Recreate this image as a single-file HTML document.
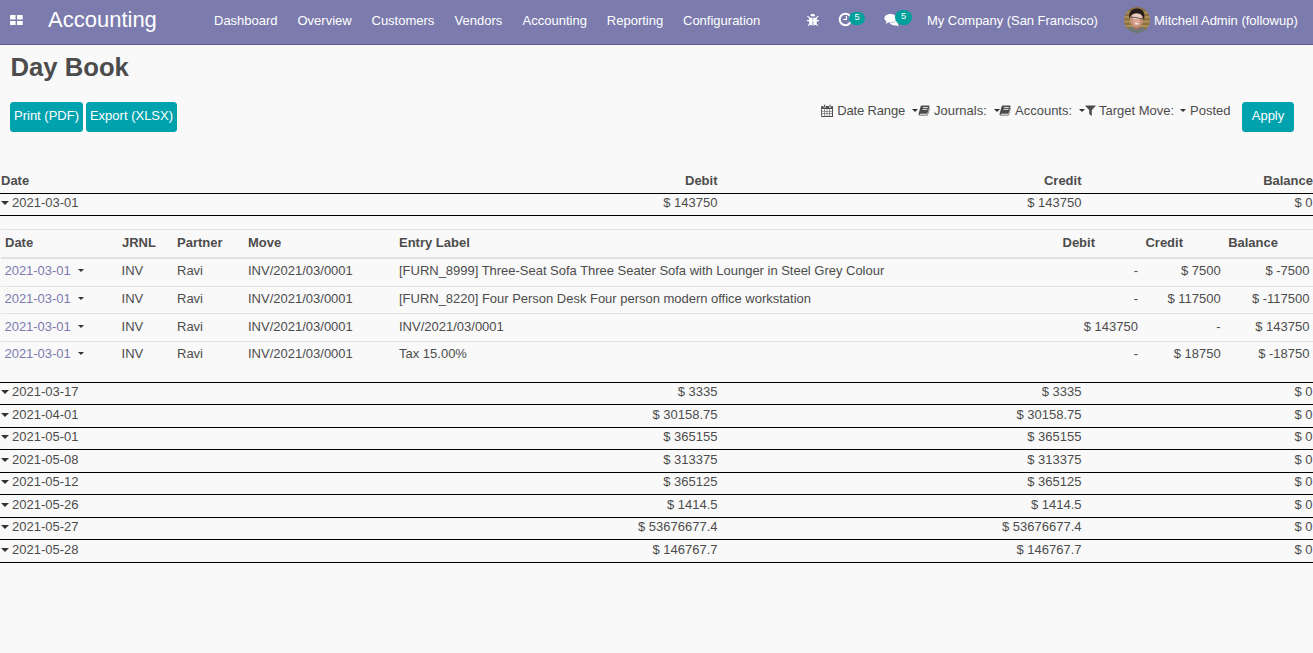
<!DOCTYPE html>
<html><head><meta charset="utf-8">
<style>
*{box-sizing:border-box}
html,body{margin:0;padding:0}
body{width:1313px;height:653px;overflow:hidden;background:#f9f9f9;font-family:"Liberation Sans",sans-serif;font-size:13px;color:#4c4c4c;position:relative}
.nav{position:absolute;left:0;top:0;width:1313px;height:45px;background:#7c7bad;border-bottom:1px solid #5f5e97;color:#fff}
.nav span.t{position:absolute;top:12.5px;font-size:13px;line-height:15px;white-space:nowrap;color:#fff}
.brand{position:absolute;left:48px;top:7.4px;font-size:22px;line-height:26px;color:#fff}
h1{position:absolute;left:10.6px;top:50.7px;margin:0;font-size:25.65px;line-height:32px;font-weight:bold;color:#4c4c4c}
.btn{position:absolute;background:#00a2ad;border:1px solid #00a2ad;border-radius:3px;color:#fff;font-size:13px;line-height:15px;padding:4.6px 0 0;text-align:center;white-space:nowrap;height:30px}
.f{position:absolute;top:103px;font-size:13px;line-height:15px;white-space:nowrap;color:#4c4c4c}
.row{position:absolute;left:0;width:1313px;font-size:13px;line-height:15px}
.row span{position:absolute;top:0;white-space:nowrap}
.row span.r{text-align:right}
.ln{position:absolute;left:0;width:1313px;height:1px;background:#000}
.caret{position:absolute;width:0;height:0;border-left:4px solid transparent;border-right:4px solid transparent;border-top:4px solid #333}
.hd{font-weight:bold}
.lnk{color:#7c7bad}
.bdg{position:absolute;background:#00a09d;color:#fff;font-size:9.3px;text-align:center}
.fi{position:absolute}
.bdg b{display:block;font-weight:normal}
.gl{position:absolute;left:1px;width:1312px;background:#dee2e6}
</style></head><body>
<div class="nav">
 <svg style="position:absolute;left:9.8px;top:14.6px" width="12.8" height="10.6" viewBox="0 0 12.8 10.6"><rect x="0" y="0" width="5.6" height="4.5" rx=".5" fill="#fff"/><rect x="7" y="0" width="5.7" height="4.5" rx=".5" fill="#fff"/><rect x="0" y="6" width="5.6" height="4.5" rx=".5" fill="#fff"/><rect x="7" y="6" width="5.7" height="4.5" rx=".5" fill="#fff"/></svg>
 <div class="brand">Accounting</div>
 <span class="t" style="left:214px">Dashboard</span>
 <span class="t" style="left:297.5px">Overview</span>
 <span class="t" style="left:371.5px">Customers</span>
 <span class="t" style="left:454.6px">Vendors</span>
 <span class="t" style="left:522.6px">Accounting</span>
 <span class="t" style="left:606.8px">Reporting</span>
 <span class="t" style="left:683px">Configuration</span>

 <!-- bug -->
 <svg style="position:absolute;left:806px;top:13px" width="14" height="14" viewBox="0 0 14 14" fill="none" stroke="#fff" stroke-width="1.1" stroke-linecap="round">
  <path d="M4.4 3.3 A2.4 2.5 0 0 1 9.2 3.3 Z" fill="#fff" stroke="none"/>
  <path d="M3 4.8 H10.8 V9.4 Q10.8 12.3 6.9 12.3 Q3 12.3 3 9.4 Z" fill="#fff" stroke="none"/>
  <path d="M6.9 5.2 V12.4" stroke="#8f8ebc" stroke-width=".9" stroke-linecap="butt"/>
  <path d="M1.3 7.6 H12.5 M1.8 3.3 L3.6 5.1 M12 3.3 L10.2 5.1 M3.7 11.2 L2.3 12.4 M10.1 11.2 L11.5 12.4"/>
 </svg>
 <!-- clock -->
 <svg style="position:absolute;left:837px;top:11px" width="17" height="17" viewBox="0 0 17 17">
  <circle cx="8.45" cy="8.45" r="5.75" fill="none" stroke="#fff" stroke-width="2"/>
  <path d="M8.8 4.9 h1.2 v4.1 h-3.9 v-1.1 h2.7 z" fill="#fff"/>
 </svg>
 <div class="bdg" style="left:849px;top:12px;width:16px;height:13px;border-radius:6.5px;line-height:11px"><b>5</b></div>
 <!-- comments -->
 <svg style="position:absolute;left:882px;top:12px" width="20" height="16" viewBox="0 0 20 16">
  <path d="M12.4 6.2 C15.2 6.2 17.4 7.8 17.4 9.8 C17.4 10.9 16.8 11.8 15.8 12.5 C16 13.1 16.4 13.7 17.1 14.1 C15.9 14.1 14.8 13.8 14 13.2 C13.5 13.3 12.9 13.4 12.4 13.4 C9.6 13.4 7.4 11.8 7.4 9.8 C7.4 7.8 9.6 6.2 12.4 6.2 Z" fill="#fff"/>
  <path d="M8.5 1.9 C11.9 1.9 14.6 3.8 14.6 6.1 C14.6 8.5 11.9 10.4 8.5 10.4 C7.9 10.4 7.3 10.3 6.8 10.2 C5.8 11.1 4.7 11.6 3.4 11.8 C4 11.2 4.5 10.5 4.6 9.5 C3.2 8.7 2.4 7.5 2.4 6.1 C2.4 3.8 5.1 1.9 8.5 1.9 Z" fill="#fff" stroke="#7c7bad" stroke-width=".9" paint-order="stroke"/>
 </svg>
 <div class="bdg" style="left:895px;top:10px;width:17px;height:15px;border-radius:7.7px;line-height:11px;padding-top:1px"><b>5</b></div>
 <!-- avatar -->
 <svg style="position:absolute;left:1124px;top:7px" width="26" height="26" viewBox="0 0 26 26">
  <defs><clipPath id="av"><circle cx="13" cy="13" r="13"/></clipPath>
  <filter id="bl" x="-10%" y="-10%" width="120%" height="120%"><feGaussianBlur stdDeviation=".55"/></filter></defs>
  <g clip-path="url(#av)"><g filter="url(#bl)">
   <rect x="-2" y="-2" width="30" height="30" fill="#8c7040"/>
   <g fill="#ab9058"><rect x="-2" y="4.5" width="30" height="2.2"/><rect x="-2" y="9" width="30" height="2.2"/><rect x="-2" y="13.5" width="30" height="2.2"/><rect x="-2" y="18" width="30" height="2.2"/><rect x="-2" y="22.5" width="30" height="2"/></g>
   <path d="M1 28 C2 22 6 20 9.5 19.8 L16.5 19.8 C20.5 20.8 22.5 22.5 23.5 28 Z" fill="#6c7876"/>
   <path d="M8.8 17 H15.8 V21.3 C13.4 23 11.2 23 8.8 21.3 Z" fill="#a8735e"/>
   <ellipse cx="12.5" cy="12.8" rx="6.6" ry="7.8" fill="#c8917a"/>
   <ellipse cx="13" cy="9.6" rx="4.8" ry="3.2" fill="#e9cdc1"/>
   <ellipse cx="12.3" cy="14.3" rx="3.6" ry="2" fill="#d9a591"/>
   <path d="M5.2 11.5 C4.2 5 8 1.2 13.2 1.4 C18.6 1.6 21.6 5 20 13.6 C19.2 9.6 18 7 14.2 6.4 C10 5.8 7 7.2 5.2 11.5 Z" fill="#241e1d"/>
   <path d="M6 10 L12 10.6 L19.2 12" stroke="#45393a" stroke-width=".8" fill="none"/>
   <ellipse cx="12.8" cy="16.8" rx="2.2" ry="1" fill="#f3e3de"/>
  </g></g>
 </svg>
 <span class="t" style="left:927px;letter-spacing:-.04px">My Company (San Francisco)</span>
 <span class="t" style="left:1154px">Mitchell Admin (followup)</span>
</div>
<h1>Day Book</h1>
<div class="btn" style="left:10px;top:102px;width:73px">Print (PDF)</div>
<div class="btn" style="left:86px;top:102px;width:91px">Export (XLSX)</div>
<div class="btn" style="left:1242px;top:102px;width:52px">Apply</div>
<span class="f" style="left:837.2px;letter-spacing:-.15px">Date Range</span>
<span class="f" style="left:934px">Journals:</span>
<span class="f" style="left:1015px">Accounts:</span>
<span class="f" style="left:1099px">Target Move:</span>
<span class="f" style="left:1190px">Posted</span>


<!-- calendar -->
<svg class="fi" style="left:821px;top:103.8px" width="12.2" height="13.2" viewBox="0 0 12.2 13.2">
 <rect x=".15" y="2" width="11.9" height="11" rx=".9" fill="#4c4c4c"/>
 <g fill="#f9f9f9"><rect x="1.05" y="5.00" width="2.1" height="2.0"/><rect x="3.65" y="5.00" width="2.1" height="2.0"/><rect x="6.25" y="5.00" width="2.1" height="2.0"/><rect x="8.85" y="5.00" width="2.1" height="2.0"/><rect x="1.05" y="7.50" width="2.1" height="2.0"/><rect x="3.65" y="7.50" width="2.1" height="2.0"/><rect x="6.25" y="7.50" width="2.1" height="2.0"/><rect x="8.85" y="7.50" width="2.1" height="2.0"/><rect x="1.05" y="10.00" width="2.1" height="2.0"/><rect x="3.65" y="10.00" width="2.1" height="2.0"/><rect x="6.25" y="10.00" width="2.1" height="2.0"/><rect x="8.85" y="10.00" width="2.1" height="2.0"/></g>
 <rect x="2.5" y="0" width="2.3" height="4" rx="1.1" fill="#f9f9f9"/><rect x="3.1" y=".5" width="1.1" height="3" rx=".55" fill="#4c4c4c"/>
 <rect x="7.9" y="0" width="2.3" height="4" rx="1.1" fill="#f9f9f9"/><rect x="8.5" y=".5" width="1.1" height="3" rx=".55" fill="#4c4c4c"/>
</svg>
<i class="caret" style="left:911.5px;top:109.3px;border-width:3px 3px 0 3px"></i>
<i class="caret" style="left:993.5px;top:109.3px;border-width:3px 3px 0 3px"></i>
<i class="caret" style="left:1079px;top:109.3px;border-width:3px 3px 0 3px"></i>
<i class="caret" style="left:1180px;top:109.3px;border-width:3px 3px 0 3px"></i>
<svg class="fi" style="left:917.5px;top:105px" width="12" height="11" viewBox="0 0 12 11"><path d="M3.6 .4 H10.9 Q11.7 .4 11.5 1.2 L9.6 8.1 Q9.4 8.8 8.6 8.8 H2.2 Q1.5 8.8 1.6 9.3 Q1.7 9.7 2.4 9.7 H8.9 Q9.5 9.7 9.7 9.1 L11.6 2.6 Q12 3 11.8 3.6 L10.1 9.6 Q9.8 10.6 8.9 10.6 H2 Q.4 10.6 .5 9 Q.5 8.6 .7 8.2 L2.6 1.6 Q2.9 .4 3.6 .4 Z" fill="#4c4c4c"/>
 <path d="M5.1 2.5 H9.8 M4.6 4.4 H9.3" stroke="#f9f9f9" stroke-width=".85" fill="none"/></svg>
<svg class="fi" style="left:998.8px;top:105px" width="12" height="11" viewBox="0 0 12 11"><path d="M3.6 .4 H10.9 Q11.7 .4 11.5 1.2 L9.6 8.1 Q9.4 8.8 8.6 8.8 H2.2 Q1.5 8.8 1.6 9.3 Q1.7 9.7 2.4 9.7 H8.9 Q9.5 9.7 9.7 9.1 L11.6 2.6 Q12 3 11.8 3.6 L10.1 9.6 Q9.8 10.6 8.9 10.6 H2 Q.4 10.6 .5 9 Q.5 8.6 .7 8.2 L2.6 1.6 Q2.9 .4 3.6 .4 Z" fill="#4c4c4c"/>
 <path d="M5.1 2.5 H9.8 M4.6 4.4 H9.3" stroke="#f9f9f9" stroke-width=".85" fill="none"/></svg>
<!-- filter -->
<svg class="fi" style="left:1085px;top:104.8px" width="11" height="11.5" viewBox="0 0 11 11.5"><path d="M.6 .4 H10.4 Q10.9 .7 10.5 1.2 L6.8 5 V11 L4.2 9 V5 L.5 1.2 Q.1 .7 .6 .4 Z" fill="#4c4c4c"/></svg>
<!-- main table header -->
<div class="row hd" style="top:173px"><span style="left:1px">Date</span><span class="r" style="right:595.5px">Debit</span><span class="r" style="right:231.5px">Credit</span><span class="r" style="right:0">Balance</span></div>
<div class="ln" style="top:193px"></div>
<div class="row" style="top:195px"><i class="caret" style="left:1px;top:6px"></i><span style="left:12px">2021-03-01</span><span class="r" style="right:595.5px">$ 143750</span><span class="r" style="right:231.5px">$ 143750</span><span class="r" style="right:.5px">$ 0</span></div>
<div class="ln" style="top:215px"></div>

<!-- inner table -->
<div class="gl" style="top:229px;height:1px"></div>
<div class="row hd" style="top:235px"><span style="left:5px">Date</span><span style="left:122px">JRNL</span><span style="left:177px">Partner</span><span style="left:248px">Move</span><span style="left:399px">Entry Label</span><span class="r" style="right:218px">Debit</span><span class="r" style="right:130px">Credit</span><span class="r" style="right:35px">Balance</span></div>
<div class="gl" style="top:257px;height:2px"></div>
<div class="row" style="top:263px"><span class="lnk" style="left:4.5px;letter-spacing:-.03px">2021-03-01</span><i class="caret" style="left:78px;top:6px;border-width:3px 3px 0 3px"></i><span style="left:121.6px">INV</span><span style="left:177px">Ravi</span><span style="left:248px">INV/2021/03/0001</span><span style="left:399px;letter-spacing:-.017px">[FURN_8999] Three-Seat Sofa Three Seater Sofa with Lounger in Steel Grey Colour</span><span class="r" style="right:175px">-</span><span class="r" style="right:92.3px">$ 7500</span><span class="r" style="right:3.5px">$ -7500</span></div>
<div class="gl" style="top:286px;height:1px"></div>
<div class="row" style="top:291px"><span class="lnk" style="left:4.5px;letter-spacing:-.03px">2021-03-01</span><i class="caret" style="left:78px;top:6px;border-width:3px 3px 0 3px"></i><span style="left:121.6px">INV</span><span style="left:177px">Ravi</span><span style="left:248px">INV/2021/03/0001</span><span style="left:399px;letter-spacing:-.017px">[FURN_8220] Four Person Desk Four person modern office workstation</span><span class="r" style="right:175px">-</span><span class="r" style="right:92.3px">$ 117500</span><span class="r" style="right:3.5px">$ -117500</span></div>
<div class="gl" style="top:313px;height:1px"></div>
<div class="row" style="top:319px"><span class="lnk" style="left:4.5px;letter-spacing:-.03px">2021-03-01</span><i class="caret" style="left:78px;top:6px;border-width:3px 3px 0 3px"></i><span style="left:121.6px">INV</span><span style="left:177px">Ravi</span><span style="left:248px">INV/2021/03/0001</span><span style="left:399px">INV/2021/03/0001</span><span class="r" style="right:175px">$ 143750</span><span class="r" style="right:92.3px">-</span><span class="r" style="right:3.5px">$ 143750</span></div>
<div class="gl" style="top:341px;height:1px"></div>
<div class="row" style="top:346px"><span class="lnk" style="left:4.5px;letter-spacing:-.03px">2021-03-01</span><i class="caret" style="left:78px;top:6px;border-width:3px 3px 0 3px"></i><span style="left:121.6px">INV</span><span style="left:177px">Ravi</span><span style="left:248px">INV/2021/03/0001</span><span style="left:399px">Tax 15.00%</span><span class="r" style="right:175px">-</span><span class="r" style="right:92.3px">$ 18750</span><span class="r" style="right:3.5px">$ -18750</span></div>
<div class="ln" style="top:382px"></div>
<div class="row" style="top:384px"><i class="caret" style="left:1px;top:6px"></i><span style="left:12px">2021-03-17</span><span class="r" style="right:595.5px">$ 3335</span><span class="r" style="right:231.5px">$ 3335</span><span class="r" style="right:.5px">$ 0</span></div>
<div class="ln" style="top:404px"></div>
<div class="row" style="top:407px"><i class="caret" style="left:1px;top:6px"></i><span style="left:12px">2021-04-01</span><span class="r" style="right:595.5px">$ 30158.75</span><span class="r" style="right:231.5px">$ 30158.75</span><span class="r" style="right:.5px">$ 0</span></div>
<div class="ln" style="top:427px"></div>
<div class="row" style="top:429px"><i class="caret" style="left:1px;top:6px"></i><span style="left:12px">2021-05-01</span><span class="r" style="right:595.5px">$ 365155</span><span class="r" style="right:231.5px">$ 365155</span><span class="r" style="right:.5px">$ 0</span></div>
<div class="ln" style="top:449px"></div>
<div class="row" style="top:452px"><i class="caret" style="left:1px;top:6px"></i><span style="left:12px">2021-05-08</span><span class="r" style="right:595.5px">$ 313375</span><span class="r" style="right:231.5px">$ 313375</span><span class="r" style="right:.5px">$ 0</span></div>
<div class="ln" style="top:472px"></div>
<div class="row" style="top:474px"><i class="caret" style="left:1px;top:6px"></i><span style="left:12px">2021-05-12</span><span class="r" style="right:595.5px">$ 365125</span><span class="r" style="right:231.5px">$ 365125</span><span class="r" style="right:.5px">$ 0</span></div>
<div class="ln" style="top:494px"></div>
<div class="row" style="top:497px"><i class="caret" style="left:1px;top:6px"></i><span style="left:12px">2021-05-26</span><span class="r" style="right:595.5px">$ 1414.5</span><span class="r" style="right:231.5px">$ 1414.5</span><span class="r" style="right:.5px">$ 0</span></div>
<div class="ln" style="top:517px"></div>
<div class="row" style="top:519px"><i class="caret" style="left:1px;top:6px"></i><span style="left:12px">2021-05-27</span><span class="r" style="right:595.5px">$ 53676677.4</span><span class="r" style="right:231.5px">$ 53676677.4</span><span class="r" style="right:.5px">$ 0</span></div>
<div class="ln" style="top:539px"></div>
<div class="row" style="top:542px"><i class="caret" style="left:1px;top:6px"></i><span style="left:12px">2021-05-28</span><span class="r" style="right:595.5px">$ 146767.7</span><span class="r" style="right:231.5px">$ 146767.7</span><span class="r" style="right:.5px">$ 0</span></div>
<div class="ln" style="top:562px"></div>
</body></html>
